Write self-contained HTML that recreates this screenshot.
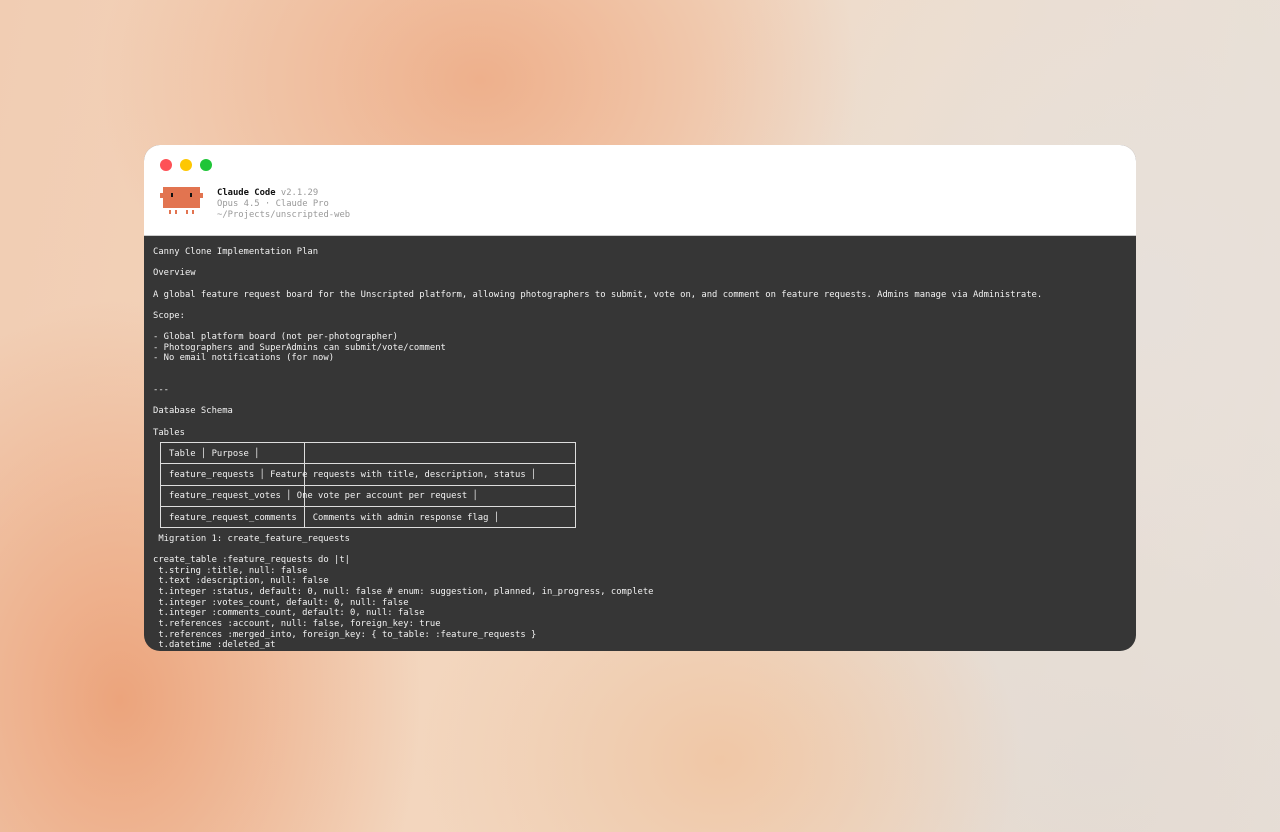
<!DOCTYPE html>
<html><head><meta charset="utf-8"><style>
html,body{margin:0;padding:0;width:1280px;height:832px;overflow:hidden}
body{position:relative;background:
radial-gradient(ellipse 300px 400px at 120px 700px,#eca47c 0%,rgba(236,164,124,0) 100%),
radial-gradient(ellipse 380px 300px at 480px 80px,#eeb08c 0%,rgba(238,176,140,0) 100%),
radial-gradient(ellipse 300px 250px at 720px 760px,#f0c7a6 0%,rgba(240,199,166,0) 100%),
radial-gradient(ellipse 500px 600px at 1150px 300px,#e7e0da 0%,rgba(231,224,218,0) 100%),
radial-gradient(ellipse 400px 400px at 1100px 760px,#e3dad2 0%,rgba(227,218,210,0) 100%),
linear-gradient(100deg,#f1cdb3 0%,#f3d6be 40%,#efdcca 65%,#e8e0d8 100%);}
.win{position:absolute;left:144px;top:145px;width:992px;height:506px;border-radius:16px;overflow:hidden;background:#363636}
.head{position:absolute;left:0;top:0;width:992px;height:90px;background:#fff;border-bottom:1px solid #ccc}
.dot{position:absolute;top:14px;width:12px;height:12px;border-radius:50%}
.m{font-family:"DejaVu Sans Mono","Liberation Mono",monospace;font-size:8.86px}
.hd{position:absolute;left:73px;top:43px;line-height:10.8px;color:#999;white-space:pre}
.hd b{color:#111}
.body{position:absolute;left:9px;top:102px;color:#f2f2f2;line-height:10.62px;white-space:pre}
.o{position:absolute;background:#e27450}
.k{position:absolute;background:#111}
.ln{position:absolute;background:#ddd}
</style></head><body>
<div class="win">
<div class="head">
<div class="dot" style="left:16px;background:#fe5156"></div>
<div class="dot" style="left:36px;background:#fec702"></div>
<div class="dot" style="left:56px;background:#1fc538"></div>
<div class="o" style="left:19px;top:42px;width:37px;height:21px"></div>
<div class="o" style="left:16px;top:48px;width:43px;height:5px"></div>
<div class="k" style="left:27px;top:48px;width:2px;height:4px"></div>
<div class="k" style="left:46px;top:48px;width:2px;height:4px"></div>
<div class="o" style="left:25px;top:65px;width:2px;height:4px"></div>
<div class="o" style="left:31px;top:65px;width:2px;height:4px"></div>
<div class="o" style="left:42px;top:65px;width:2px;height:4px"></div>
<div class="o" style="left:48px;top:65px;width:2px;height:4px"></div>
<div class="hd m"><b>Claude Code</b> v2.1.29
Opus 4.5 · Claude Pro
~/Projects/unscripted-web</div>
</div>
<div class="ln" style="left:16px;top:297px;width:416px;height:1px"></div>
<div class="ln" style="left:16px;top:318px;width:416px;height:1px"></div>
<div class="ln" style="left:16px;top:340px;width:416px;height:1px"></div>
<div class="ln" style="left:16px;top:361px;width:416px;height:1px"></div>
<div class="ln" style="left:16px;top:382px;width:416px;height:1px"></div>
<div class="ln" style="left:16px;top:297px;width:1px;height:86px"></div>
<div class="ln" style="left:431px;top:297px;width:1px;height:86px"></div>
<div class="ln" style="left:160px;top:297px;width:1px;height:86px"></div>
<div class="body m">Canny Clone Implementation Plan

Overview

A global feature request board for the Unscripted platform, allowing photographers to submit, vote on, and comment on feature requests. Admins manage via Administrate.

Scope:

- Global platform board (not per-photographer)
- Photographers and SuperAdmins can submit/vote/comment
- No email notifications (for now)


---

Database Schema

Tables

   Table │ Purpose │

   feature_requests │ Feature requests with title, description, status │

   feature_request_votes │ One vote per account per request │

   feature_request_comments   Comments with admin response flag │

 Migration 1: create_feature_requests

create_table :feature_requests do |t|
 t.string :title, null: false
 t.text :description, null: false
 t.integer :status, default: 0, null: false # enum: suggestion, planned, in_progress, complete
 t.integer :votes_count, default: 0, null: false
 t.integer :comments_count, default: 0, null: false
 t.references :account, null: false, foreign_key: true
 t.references :merged_into, foreign_key: { to_table: :feature_requests }
 t.datetime :deleted_at</div>
</div>
</body></html>
